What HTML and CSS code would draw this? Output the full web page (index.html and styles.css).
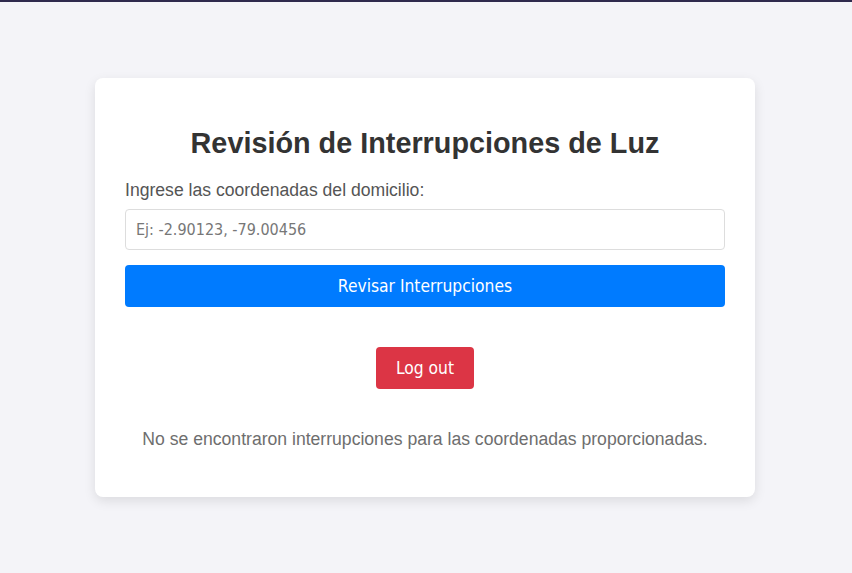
FILE: index.html
```html
<!DOCTYPE html>
<html lang="es">
<head>
<meta charset="utf-8">
<title>Revisión de Interrupciones de Luz</title>
<link rel="stylesheet" href="styles.css">
</head>
<body>
<div class="topbar"></div>
<main class="page">
  <section class="card">
    <h1 class="title">Revisión de Interrupciones de Luz</h1>
    <label class="label" for="coords">Ingrese las coordenadas del domicilio:</label>
    <input class="input" id="coords" type="text" placeholder="Ej: -2.90123, -79.00456">
    <button class="btn btn-primary" type="button">Revisar Interrupciones</button>
    <div class="logout-row">
      <button class="btn btn-danger" type="button">Log out</button>
    </div>
    <p class="message">No se encontraron interrupciones para las coordenadas proporcionadas.</p>
  </section>
</main>
</body>
</html>
```
FILE: styles.css
```css
* { box-sizing: border-box; }
html, body { margin: 0; padding: 0; }
body {
  background: #f4f4f8;
  font-family: "Liberation Sans", Arial, sans-serif;
  color: #333;
}
.topbar { height: 2px; background: #2f2a4d; }
.page {
  min-height: 571px;
  display: flex;
  align-items: center;
  justify-content: center;
  padding-right: 2px;
}
.card {
  width: 660px;
  background: #fff;
  border-radius: 8px;
  padding: 30px;
  box-shadow: 0 4px 12px rgba(0, 0, 0, 0.1);
  display: flex;
  flex-direction: column;
}
.title {
  font-size: 28.8px;
  line-height: 33px;
  font-weight: bold;
  text-align: center;
  margin: 19px 0 20px;
  color: #333;
}
.label {
  font-size: 17.6px;
  line-height: 20px;
  color: #555;
  margin-bottom: 9px;
}
.input {
  height: 41px;
  border: 1px solid #ddd;
  border-radius: 4px;
  padding: 0 10px;
  font-family: "DejaVu Sans Condensed", "Liberation Sans", sans-serif;
  font-size: 16px;
  color: #333;
  margin-bottom: 15px;
}
.input::placeholder { color: #777; }
.btn {
  border: none;
  border-radius: 4px;
  height: 42px;
  color: #fff;
  font-family: "DejaVu Sans Condensed", "Liberation Sans", sans-serif;
  font-size: 17.3px;
}
.btn-primary { background: #007bff; width: 100%; }
.logout-row {
  display: flex;
  justify-content: center;
  margin-top: 40px;
}
.btn-danger { background: #dc3545; padding: 0 20px; }
.message {
  text-align: center;
  font-size: 17.6px;
  line-height: 20px;
  color: #6e6e6e;
  margin: 40px 0 18px;
}
```
